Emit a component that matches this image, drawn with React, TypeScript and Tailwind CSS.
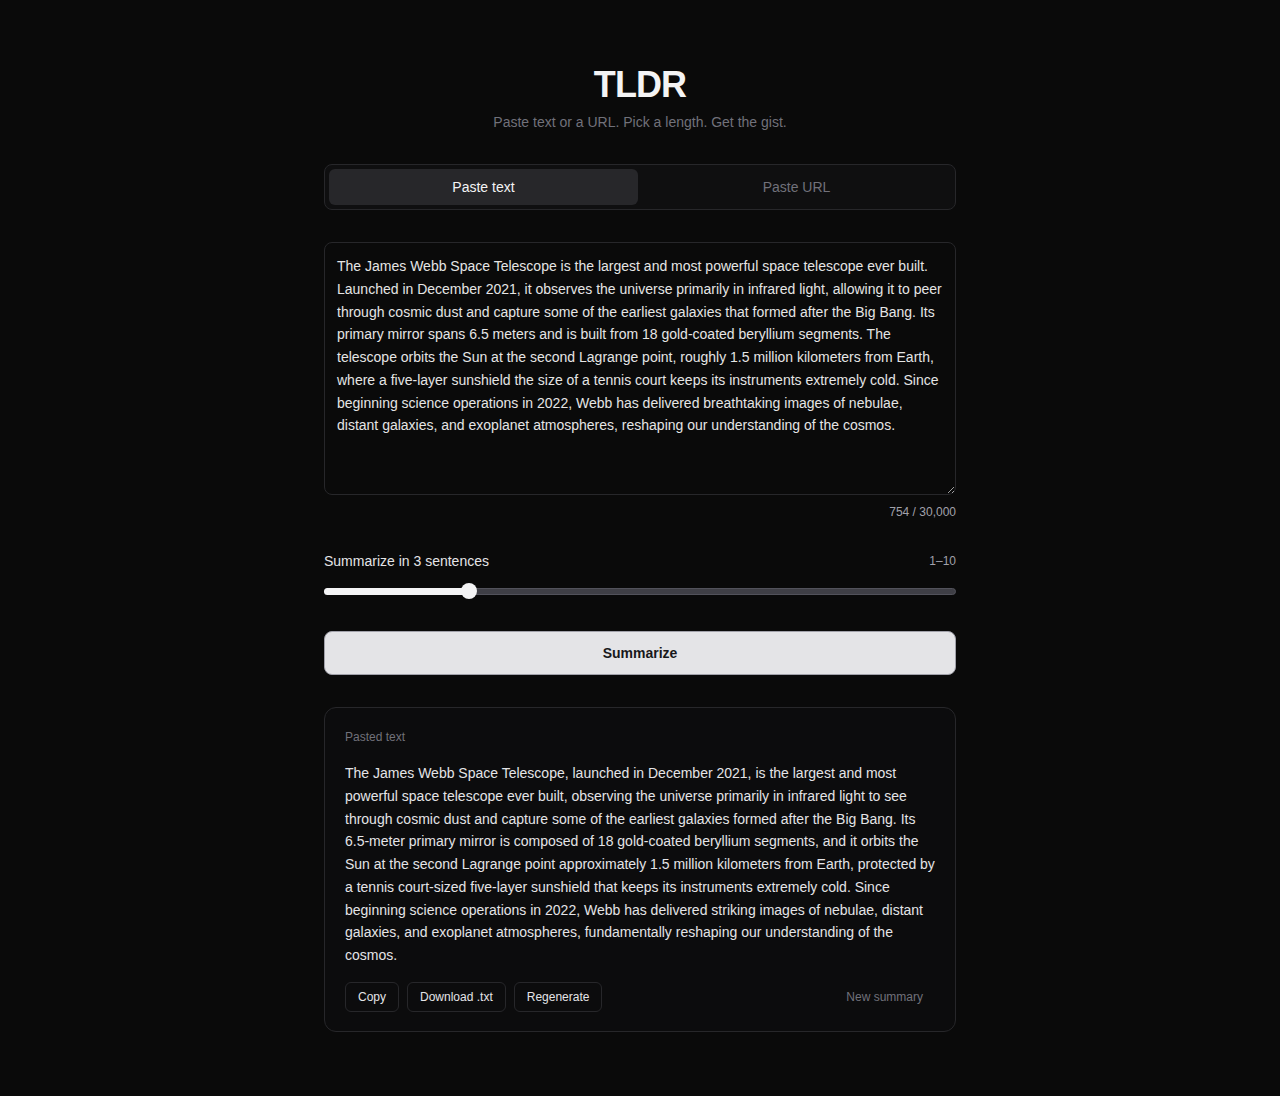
const SOURCE =
  "The James Webb Space Telescope is the largest and most powerful space telescope ever built. Launched in December 2021, it observes the universe primarily in infrared light, allowing it to peer through cosmic dust and capture some of the earliest galaxies that formed after the Big Bang. Its primary mirror spans 6.5 meters and is built from 18 gold-coated beryllium segments. The telescope orbits the Sun at the second Lagrange point, roughly 1.5 million kilometers from Earth, where a five-layer sunshield the size of a tennis court keeps its instruments extremely cold. Since beginning science operations in 2022, Webb has delivered breathtaking images of nebulae, distant galaxies, and exoplanet atmospheres, reshaping our understanding of the cosmos.";

const SUMMARY =
  "The James Webb Space Telescope, launched in December 2021, is the largest and most powerful space telescope ever built, observing the universe primarily in infrared light to see through cosmic dust and capture some of the earliest galaxies formed after the Big Bang. Its 6.5-meter primary mirror is composed of 18 gold-coated beryllium segments, and it orbits the Sun at the second Lagrange point approximately 1.5 million kilometers from Earth, protected by a tennis court-sized five-layer sunshield that keeps its instruments extremely cold. Since beginning science operations in 2022, Webb has delivered striking images of nebulae, distant galaxies, and exoplanet atmospheres, fundamentally reshaping our understanding of the cosmos.";

export default function App() {
  const sentences = 3;
  const frac = (sentences - 1) / 9;
  // thumb center like a native range input: 8px inset at both ends
  const thumbLeft = `calc(8px + (100% - 16px) * ${frac})`;

  return (
    <div className="min-h-[1096px] bg-[#0a0a0a] font-['Liberation_Sans',Arial,sans-serif] text-[#e5e5e5]">
      <main className="mx-auto w-[632px] pt-[64px] pb-16">
        {/* Header */}
        <div className="text-center">
          <h1 className="text-[36px] font-bold leading-[42px] tracking-tight text-[#f4f4f5]">TLDR</h1>
          <p className="mt-[6px] text-sm text-[#71717a]">Paste text or a URL. Pick a length. Get the gist.</p>
        </div>

        {/* Tabs */}
        <div className="mt-[32px] flex gap-1 rounded-lg border border-[#27272a] bg-[#0f0f10] p-1">
          <button className="h-9 flex-1 rounded-md bg-[#27272a] text-sm text-[#f4f4f5]">Paste text</button>
          <button className="h-9 flex-1 rounded-md text-sm text-[#71717a]">Paste URL</button>
        </div>

        {/* Textarea */}
        <div className="mt-8">
          <textarea
            readOnly
            value={SOURCE}
            className="block h-[253px] w-full resize-y rounded-lg border border-[#27272a] bg-[#0a0a0a] px-3 py-[12px] text-sm leading-[22.75px] text-[#e5e5e5] outline-none"
          />
          <div className="mt-[9px] text-right text-xs text-[#a1a1aa]">754 / 30,000</div>
        </div>

        {/* Slider */}
        <div className="mt-[31px]">
          <div className="flex items-center justify-between">
            <span className="text-sm text-[#e4e4e7]">Summarize in {sentences} sentences</span>
            <span className="text-xs text-[#a1a1aa]">1–10</span>
          </div>
          <div className="relative mt-[12px] h-4">
            <div className="absolute left-0 right-0 top-[5px] h-[7px] rounded-full border border-[#52525b] bg-[#3f3f46]" />
            <div className="absolute left-0 top-[5px] h-[7px] rounded-full bg-[#f4f4f5]" style={{ width: thumbLeft }} />
            <div
              className="absolute top-0 h-4 w-4 -translate-x-1/2 rounded-full bg-[#f4f4f5]"
              style={{ left: thumbLeft }}
            />
          </div>
        </div>

        {/* Submit */}
        <button className="mt-[32px] h-11 w-full rounded-lg border border-[#a1a1aa] bg-[#e4e4e7] text-sm font-bold text-[#18181b]">
          Summarize
        </button>

        {/* Result */}
        <section className="mt-8 rounded-xl border border-[#27272a] bg-[#0c0c0d] px-5 pt-[21px] pb-[19px]">
          <div className="text-xs text-[#71717a]">Pasted text</div>
          <p className="mt-[17px] text-sm leading-[22.75px] text-[#e4e4e7]">{SUMMARY}</p>
          <div className="mt-[15px] flex items-center gap-2">
            <button className="h-[30px] rounded-md border border-[#27272a] px-[12px] text-xs text-[#e4e4e7]">Copy</button>
            <button className="h-[30px] rounded-md border border-[#27272a] px-[12px] text-xs text-[#e4e4e7]">Download .txt</button>
            <button className="h-[30px] rounded-md border border-[#27272a] px-[12px] text-xs text-[#e4e4e7]">Regenerate</button>
            <button className="ml-auto mr-[12px] text-xs text-[#71717a]">New summary</button>
          </div>
        </section>
      </main>
    </div>
  );
}
